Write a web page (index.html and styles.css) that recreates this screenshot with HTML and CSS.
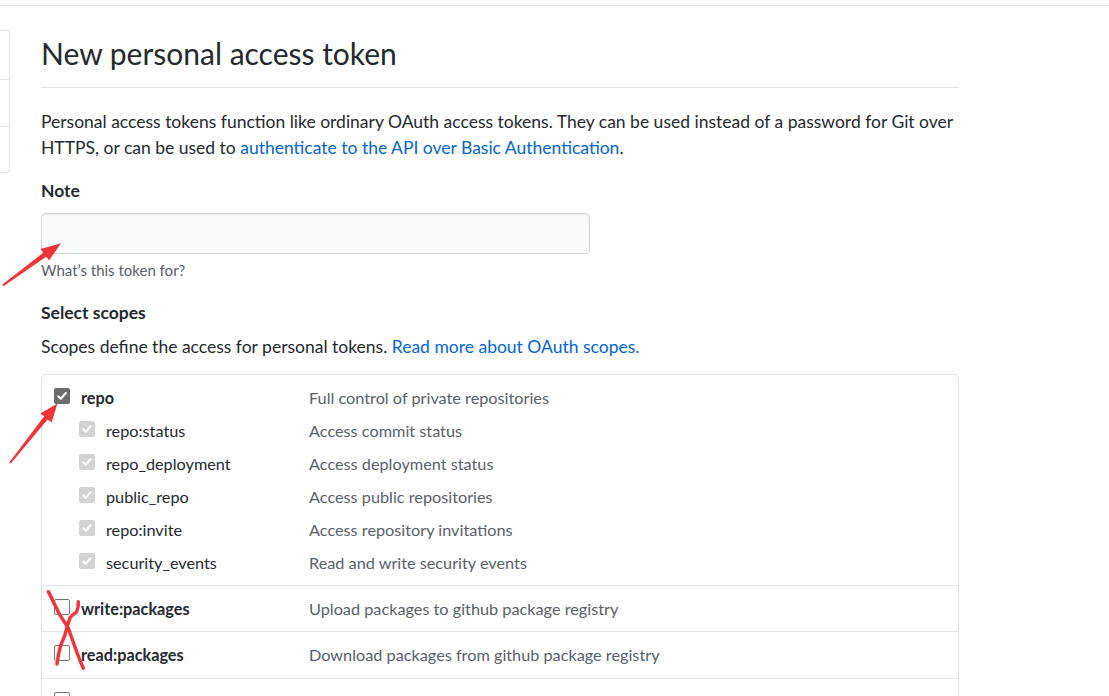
FILE: index.html
```html
<!DOCTYPE html>
<html lang="en">
<head>
<meta charset="utf-8">
<title>New personal access token</title>
<link rel="stylesheet" href="styles.css">
</head>
<body>
<div class="topline"></div>
<div class="layout">
  <nav class="sidenav">
    <div class="navitem"></div>
    <div class="navitem"></div>
    <div class="navitem"></div>
  </nav>
  <main class="main">
    <h1 class="subhead">New personal access token</h1>
    <p class="intro">Personal access tokens function like ordinary OAuth access tokens. They can be used instead of a password for Git over HTTPS, or can be used to <a href="#">authenticate to the API over Basic Authentication</a>.</p>

    <div class="form-group">
      <label class="label" for="note">Note</label>
      <input class="input" id="note" type="text">
      <p class="hint">What’s this token for?</p>
    </div>

    <h2 class="label scopes-title">Select scopes</h2>
    <p class="scopes-intro">Scopes define the access for personal tokens. <a href="#">Read more about OAuth scopes.</a></p>

    <div class="scopes">
      <div class="group first">
        <div class="row">
          <div class="name"><span class="cb checked"><svg viewBox="0 0 16 16"><path d="M3.6 8.4 L6.6 11.2 L12.4 4.6"/></svg></span><span class="scope strong">repo</span></div>
          <div class="desc">Full control of private repositories</div>
        </div>
        <div class="row">
          <div class="name sub"><span class="cb disabled"><svg viewBox="0 0 16 16"><path d="M3.6 8.4 L6.6 11.2 L12.4 4.6"/></svg></span><span class="scope">repo:status</span></div>
          <div class="desc">Access commit status</div>
        </div>
        <div class="row">
          <div class="name sub"><span class="cb disabled"><svg viewBox="0 0 16 16"><path d="M3.6 8.4 L6.6 11.2 L12.4 4.6"/></svg></span><span class="scope">repo_deployment</span></div>
          <div class="desc">Access deployment status</div>
        </div>
        <div class="row">
          <div class="name sub"><span class="cb disabled"><svg viewBox="0 0 16 16"><path d="M3.6 8.4 L6.6 11.2 L12.4 4.6"/></svg></span><span class="scope">public_repo</span></div>
          <div class="desc">Access public repositories</div>
        </div>
        <div class="row">
          <div class="name sub"><span class="cb disabled"><svg viewBox="0 0 16 16"><path d="M3.6 8.4 L6.6 11.2 L12.4 4.6"/></svg></span><span class="scope">repo:invite</span></div>
          <div class="desc">Access repository invitations</div>
        </div>
        <div class="row">
          <div class="name sub"><span class="cb disabled"><svg viewBox="0 0 16 16"><path d="M3.6 8.4 L6.6 11.2 L12.4 4.6"/></svg></span><span class="scope">security_events</span></div>
          <div class="desc">Read and write security events</div>
        </div>
      </div>
      <div class="group">
        <div class="row">
          <div class="name"><span class="cb"></span><span class="scope strong">write:packages</span></div>
          <div class="desc">Upload packages to github package registry</div>
        </div>
      </div>
      <div class="group">
        <div class="row">
          <div class="name"><span class="cb"></span><span class="scope strong">read:packages</span></div>
          <div class="desc">Download packages from github package registry</div>
        </div>
      </div>
      <div class="group">
        <div class="row">
          <div class="name"><span class="cb"></span></div>
        </div>
      </div>
    </div>
  </main>
</div>

<svg class="annotations" width="1109" height="696" viewBox="0 0 1109 696">
  <polygon class="mark-fill" points="2.4,284.4 43.4,252.6 40.6,249 61,243.2 49,260.6 46.2,256.8 3.4,286.2"/>
  <polygon class="mark-fill" points="9.2,462.6 44.2,416.2 40.4,413.4 57.4,403.6 51.6,422.4 47.6,419.4 10.8,463.6"/>
  <path class="mark-line" d="M48.3 591.7 C52 598 56 608 60 615 C63 620 66 624 68.3 628 C71 636 74 644 76.7 651.7 C79 658 81 663 83.3 668.3"/>
  <path class="mark-line" d="M78.3 601.7 C78.5 605 78 609 76.7 611.7 C74 614 71 616 70 618 C68 624 66 630 65 635 C63 640 61 644 60 648 C59 652 58 656 57.7 660 L57 664"/>
</svg>
</body>
</html>
```
FILE: styles.css
```css
* { box-sizing: border-box; }
html, body { margin: 0; padding: 0; background: #fff; }
body {
  font-family: "Lato", "Liberation Sans", sans-serif;
  font-size: 17.5px;
  line-height: 26px;
  color: #24292e;
  position: relative;
  overflow: hidden;
  height: 696px;
}
a { color: #0366d6; text-decoration: none; }

.topline { height: 6px; border-bottom: 1px solid #e1e4e8; }

.layout { display: flex; align-items: flex-start; padding-top: 25px; }

.sidenav {
  flex: none;
  width: 10px;
  border: 1px solid #e1e4e8;
  border-left: none;
  border-radius: 0 4px 4px 0;
  margin-top: -1px;
}
.navitem { height: 47px; border-top: 1px solid #e1e4e8; }
.navitem:first-child { border-top: none; height: 48px; }
.navitem:last-child { height: 46px; }

.main { margin-left: 31px; width: 918px; flex: none; }

.subhead {
  margin: 0;
  font-size: 30px;
  font-weight: 400;
  line-height: 45px;
  padding-bottom: 11px;
  border-bottom: 1px solid #e1e4e8;
}

.intro { margin: 20.5px 0 0; }

.form-group { margin-top: 17px; }
.label { display: block; margin: 0; font-size: 17.5px; font-weight: 700; line-height: 26px; }
.input {
  display: block;
  margin-top: 9px;
  width: 549px;
  height: 41px;
  padding: 6px 10px;
  font: inherit;
  background: #fafbfc;
  border: 1px solid #d1d5da;
  border-radius: 4px;
  box-shadow: inset 0 1px 2px rgba(27, 31, 35, 0.075);
}
.hint { margin: 5px 0 0; font-size: 15px; line-height: 22.5px; color: #586069; }

.scopes-title { margin-top: 19px; }
.scopes-intro { margin: 8px 0 0; }

.scopes {
  margin-top: 13.5px;
  border: 1px solid #e1e4e8;
  border-radius: 4px;
  font-size: 16.25px;
}
.group { padding: 6px 0 6.5px 12px; border-top: 1px solid #e1e4e8; }
.group.first { border-top: none; padding-bottom: 6px; }

.row { display: flex; align-items: center; height: 33px; line-height: 33px; }
.name { flex: none; width: 255px; display: flex; align-items: center; gap: 11px; }
.name.sub { padding-left: 25px; }
.scope { white-space: nowrap; }
.strong { font-weight: 700; }
.desc { color: #586069; white-space: nowrap; }

.cb {
  flex: none;
  width: 16px;
  height: 16px;
  border: 1px solid #767676;
  border-radius: 2px;
  background: #fff;
  margin-top: -3px;
  display: flex;
}
.cb svg { width: 14px; height: 14px; }
.cb path { fill: none; stroke: #fff; stroke-width: 2.4; stroke-linecap: round; stroke-linejoin: round; }
.cb.checked { background: #6b6b6b; border-color: #6b6b6b; }
.cb.disabled { background: #d3d3d3; border-color: #d3d3d3; }

.annotations { position: absolute; left: 0; top: 0; pointer-events: none; }
.mark-fill { fill: #f2333a; }
.mark-line { fill: none; stroke: #f2333a; stroke-width: 3.4; stroke-linecap: round; stroke-linejoin: round; }
```
